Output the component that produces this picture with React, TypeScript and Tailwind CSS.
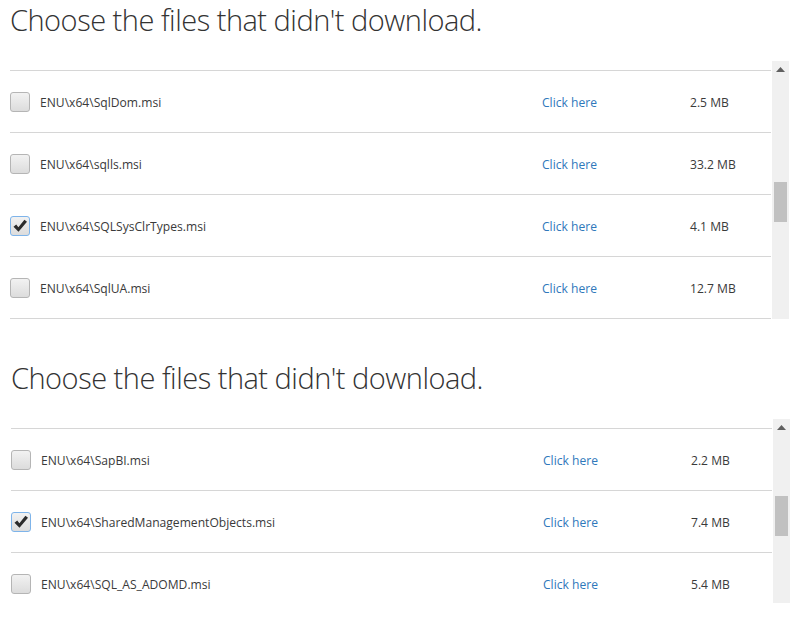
import React from "react";

type Row = { name: string; size: string; checked?: boolean };

const panel1: Row[] = [
  { name: "ENU\\x64\\SqlDom.msi", size: "2.5 MB" },
  { name: "ENU\\x64\\sqlls.msi", size: "33.2 MB" },
  { name: "ENU\\x64\\SQLSysClrTypes.msi", size: "4.1 MB", checked: true },
  { name: "ENU\\x64\\SqlUA.msi", size: "12.7 MB" },
];

const panel2: Row[] = [
  { name: "ENU\\x64\\SapBI.msi", size: "2.2 MB" },
  { name: "ENU\\x64\\SharedManagementObjects.msi", size: "7.4 MB", checked: true },
  { name: "ENU\\x64\\SQL_AS_ADOMD.msi", size: "5.4 MB" },
];

function Checkbox({ checked }: { checked?: boolean }) {
  return (
    <div
      className={
        "w-[20px] h-[20px] rounded-[3px] border flex items-center justify-center bg-gradient-to-b from-[#f2f2f2] to-[#dcdcdc] shrink-0 " +
        (checked ? "border-[#7eb4ea]" : "border-[#b5b5b5]")
      }
    >
      {checked && (
        <svg width="16" height="16" viewBox="0 0 16 16">
          <path d="M1.5 8.8 L4.2 6.6 L6.4 9.3 L12.4 1.8 L15 3.8 L6.5 13.8 Z" fill="#2b2b2b" />
        </svg>
      )}
    </div>
  );
}

function Scrollbar({ thumbTop }: { thumbTop: string }) {
  return (
    <div className="w-[17px] bg-[#f0f0f0] flex flex-col items-center shrink-0">
      <div className="pt-[6px]">
        <svg width="9" height="5" viewBox="0 0 9 5">
          <path d="M0 5 L4.5 0 L9 5 Z" fill="#606060" />
        </svg>
      </div>
      <div className={"w-[13px] h-[40px] bg-[#c1c1c1] " + thumbTop} />
    </div>
  );
}

function Section({ rows, height, thumbTop, shift }: { rows: Row[]; height: string; thumbTop: string; shift?: boolean }) {
  return (
    <div className={"flex flex-col " + (shift ? "pl-[11px]" : "pl-[10px]")}>
      <div className="h-[61px] pt-[1px]">
        <h1
          className="text-[29px] leading-[38px] font-light text-[#333333] tracking-[-0.5px]"
          style={{ fontFamily: '"Open Sans", "Noto Sans", sans-serif' }}
        >
          Choose the files that didn't download.
        </h1>
      </div>
      <div className={"flex w-[779px] overflow-hidden " + height}>
        <div className="w-[762px] pt-[9px]">
          {rows.map((r, i) => (
            <div
              key={i}
              className={
                "h-[62px] border-t border-[#d6d6d6] flex items-center " +
                (i === rows.length - 1 ? "border-b h-[63px]" : "")
              }
            >
              <Checkbox checked={r.checked} />
              <div className="ml-[10px] w-[502px] text-[12.1px] text-[#3a3a3a] pt-[4px]">{r.name}</div>
              <div className="w-[148px] text-[12.1px] text-[#2f78bb] pt-[4px]">Click here</div>
              <div className="text-[12.1px] text-[#3a3a3a] pt-[4px]">{r.size}</div>
            </div>
          ))}
        </div>
        <div className="w-[1px]" />
        <Scrollbar thumbTop={thumbTop} />
      </div>
    </div>
  );
}

export default function App() {
  return (
    <div
      className="w-[800px] h-[643px] bg-white overflow-hidden"
      style={{ fontFamily: '"Open Sans", "Noto Sans", sans-serif' }}
    >
      <Section rows={panel1} height="h-[258px]" thumbTop="mt-[110px]" />
      <div className="h-[39px]" />
      <Section rows={panel2} height="h-[184px]" thumbTop="mt-[66px]" shift />
    </div>
  );
}
